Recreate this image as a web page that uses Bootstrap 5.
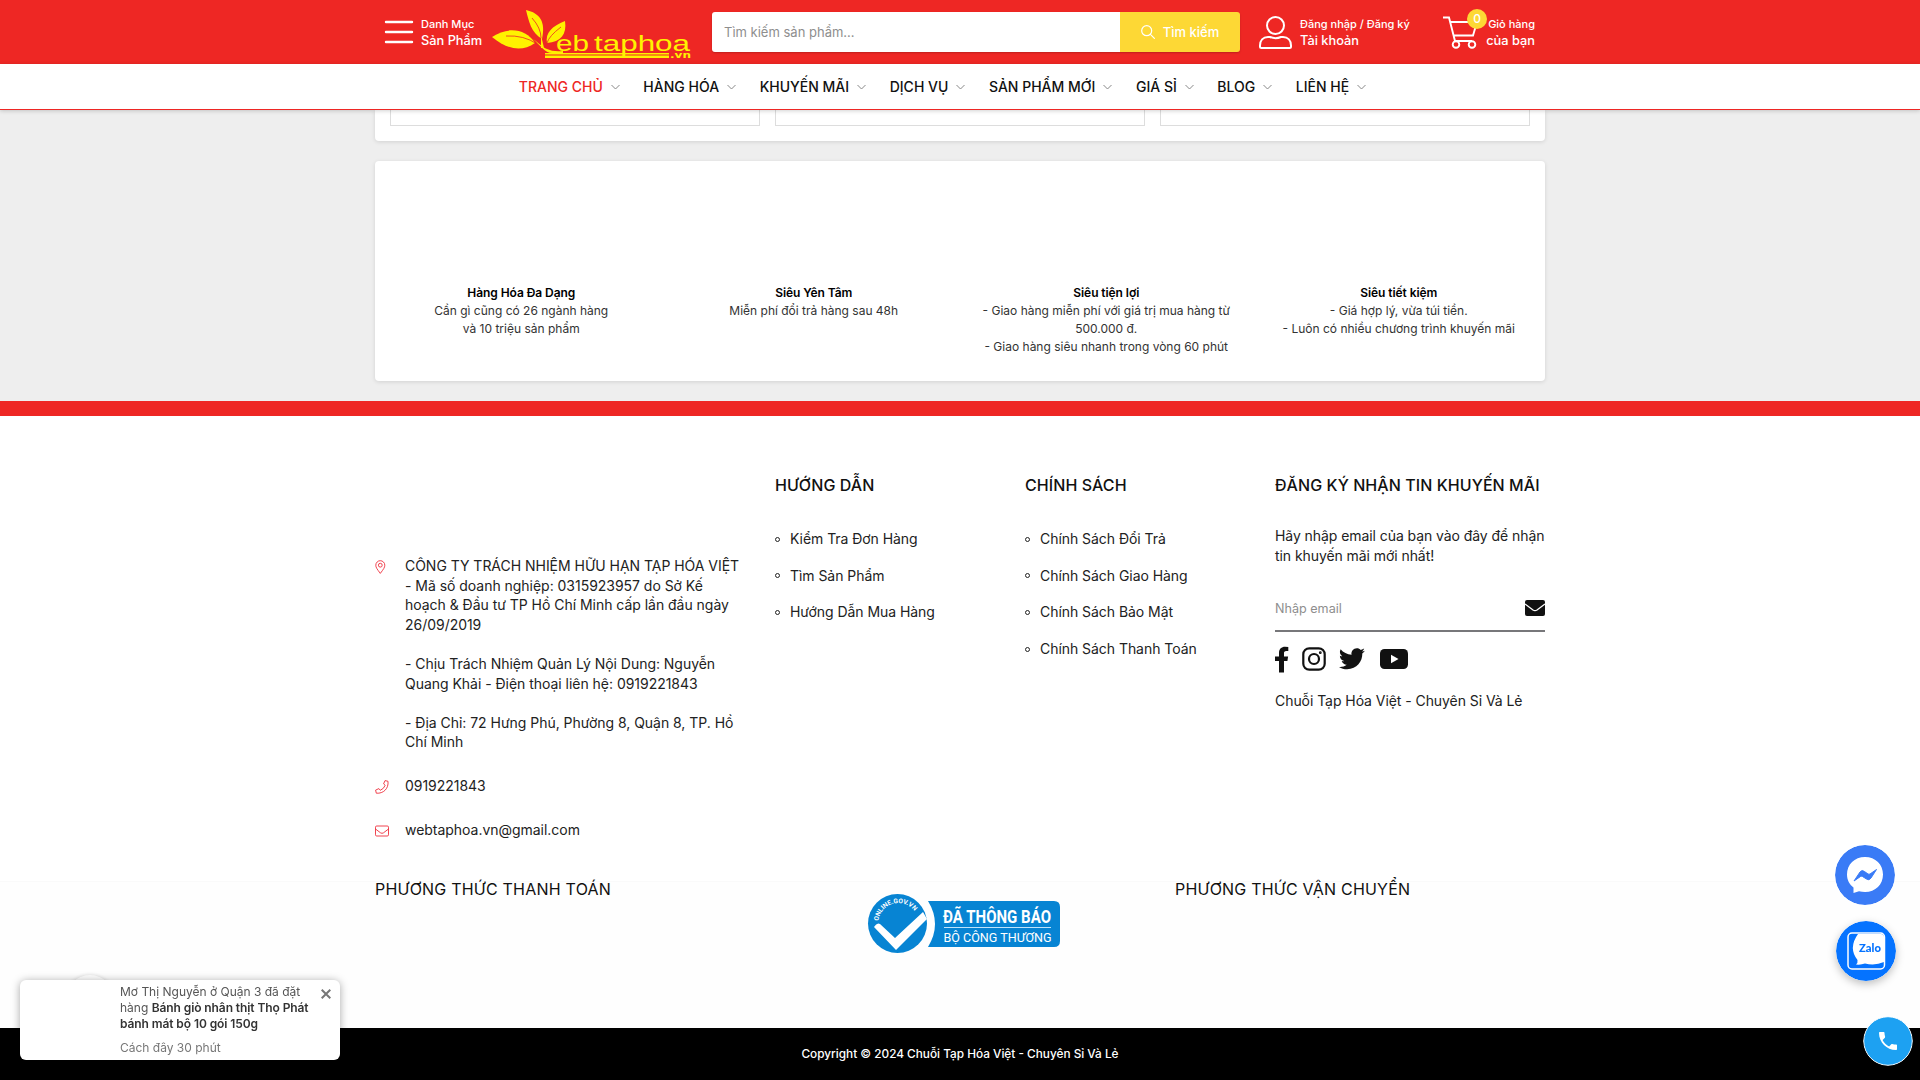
<!DOCTYPE html>
<html lang="vi">
<head>
<meta charset="utf-8">
<meta name="viewport" content="width=device-width, initial-scale=1">
<title>Chuỗi Tạp Hóa Việt - Chuyên Sỉ Và Lẻ</title>
<link href="https://cdn.jsdelivr.net/npm/bootstrap@5.3.0/dist/css/bootstrap.min.css" rel="stylesheet">
<style>
:root{--brand:#ee2724;--sun:#fdd835}
html,body{height:1080px;overflow:hidden}
body{font-family:Inter,"Noto Sans",sans-serif;font-size:14px;line-height:1.4;color:#111;background:#eee}
.wrap{width:1170px;margin:0 auto;flex:none}
.topbar{height:64px;background:var(--brand);color:#fff}
.topbar .wrap{height:64px;font-weight:500}
.two-line{line-height:18px;white-space:nowrap}
.two-line .l1{font-size:11px;height:18px}
.two-line .l2{font-size:12.8px;height:18px;margin-top:-1px}
.menu-btn{width:117px;padding-left:9px;gap:7px}
.brand-logo{width:200px;height:52px;display:block;flex:none;overflow:visible}
.search-box{width:528px;height:40px;margin-left:20px;border-radius:3px;overflow:hidden;box-shadow:0 1px 2px rgba(0,0,0,.2)}
.search-box input{border:0;width:408px;padding:0 12px;font-size:13px;outline:0}
.search-box input::placeholder,.mail-in::placeholder{color:#8e8e8e;opacity:1}
.search-box button{width:120px;border:0;background:var(--sun);color:#fff;font-size:13px;font-weight:500;padding:0}
.account{margin-left:19px;width:184px;gap:8px}
.cart-box{width:92px}
.cart-num{left:24px;top:-6px;width:20px;height:20px;background:var(--sun);border-radius:50%;font-size:12px;line-height:20px}
.mainnav{height:46px;background:#fff;border-bottom:1px solid var(--brand);box-shadow:0 1px 4px rgba(0,0,0,.18);gap:23.6px;position:relative;z-index:2;padding:0 35px 0 0}
.mainnav a{color:#111;font-weight:500;gap:8px;text-decoration:none;white-space:nowrap}
.mainnav a.on{color:var(--brand)}
.panel{background:#fff;border-radius:4px;box-shadow:0 1px 4px rgba(0,0,0,.12)}
.p-top{height:31px;padding:0 15px;border-radius:0 0 4px 4px}
.slot{width:370px;height:16px;border:1px solid #ddd;border-top:0}
.p-serv{height:220px;margin-top:20px;padding-top:123px;font-size:12px;line-height:18px;color:#333}
.p-serv b{font-weight:600;color:#000;letter-spacing:-.07px}
.redline{height:15px;background:var(--brand);margin-top:20px}
.foot{background:#fff;height:465px}
.foot h4{font-size:16px;font-weight:500;line-height:20px;margin:0;white-space:nowrap;color:#111;letter-spacing:.07px}
.foot-col{padding-top:59px}
.info{width:400px;padding-top:140px;letter-spacing:-.03px}
.info .d-flex{gap:16px;margin-bottom:24.2px}
.info svg{width:14px;flex:none;margin-top:4px}
.links{width:250px}
.links ul{list-style:none;padding:0;margin:26px 0 0;letter-spacing:-.05px}
.links li{height:36.6px;line-height:20px;display:flex;align-items:center;gap:10px;white-space:nowrap}
.links li::before{content:"";width:5px;height:5px;border:1px solid #222;border-radius:50%}
.c-light{color:#222}
.news{width:270px}
.news-note{margin-top:31px;letter-spacing:-.07px}
.mail-row{height:46px;border-bottom:2px solid #77777a;margin-top:21px}
.mail-in{border:0;font-size:12.6px;outline:0;padding:2px 0 0;width:220px}
.socials{height:28px;margin-top:13px}
.slogan{margin-top:18px;letter-spacing:-.06px}
.foot2{background:#fefefe;border-top:1px solid #fafafa;height:147px}
.foot2 h4{font-size:16px;font-weight:400;line-height:20px;margin:-3px 0 0;white-space:nowrap;letter-spacing:.22px}
.pay-head{width:490px}
.seal{margin-top:9px}
.copy{height:52px;background:#000;color:#fff;font-size:11.8px;font-weight:500}
.float-c{position:fixed;border-radius:50%}
.toastbox{position:fixed;left:20px;top:980px;width:320px;height:80px;background:#fff;border-radius:6px;box-shadow:0 1px 8px rgba(0,0,0,.35);padding:4px 30px 0 100px;font-size:12px;line-height:16px;color:#555;white-space:nowrap}
.toastbox b{font-weight:600;color:#333;letter-spacing:-.09px}
.ago{margin-top:8px;color:#777}
.ghost{position:fixed;left:65px;top:975px;width:50px;height:50px;border-radius:50%;background:#fff;box-shadow:0 0 4px rgba(0,0,0,.15)}
</style>
<script src="https://cdn.jsdelivr.net/npm/bootstrap@5.3.0/dist/js/bootstrap.bundle.min.js"></script>
</head>
<body class="d-flex flex-column">
<header class="topbar flex-shrink-0">
 <div class="wrap d-flex align-items-center">
  <div class="menu-btn d-flex align-items-center flex-shrink-0">
   <svg width="30" height="24" viewBox="0 0 30 24" stroke="#fff" stroke-width="2.4" stroke-linecap="round"><path d="M2 2h26M2 12h26M2 22h26"/></svg>
   <div class="two-line"><div class="l1">Danh Mục</div><div class="l2">Sản Phẩm</div></div>
  </div>
  <svg class="brand-logo" viewBox="492 6 200 52" fill="#fff200">
   <path d="M526 10C540 13 546 22 542 39C531 32 529 22 526 10Z"/>
   <path d="M492 37C508 26 526 29 535 43C522 52 508 50 492 37Z"/>
   <path d="M565 21C567 34 561 42 547 43C545 33 552 26 565 21Z"/>
   <path d="M533 39C539 43 542 47 547 49Q553 52 563 51L563 53H552C545 53 540 45 533 39ZM541 35L544 48H541Z"/>
   <path d="M532 18Q541 28 541 38M506 36Q524 35 537 44M561 27Q549 36 547 43" fill="none" stroke="#ee2724" stroke-width=".8"/>
   <text x="556" y="51" font-family="Liberation Sans" font-size="22" textLength="33" lengthAdjust="spacingAndGlyphs">eb</text>
   <text x="594" y="51" font-family="Liberation Sans" font-size="22" textLength="96" lengthAdjust="spacingAndGlyphs">taphoa</text>
   <path d="M545 53h124v1.5H545zM545 55.5h124V58H545z"/>
   <text x="670" y="57.500" font-family="DejaVu Sans" font-size="8" font-weight="bold" textLength="21" lengthAdjust="spacingAndGlyphs">.vn</text>
  </svg>
  <form class="search-box d-flex flex-shrink-0">
   <input type="text" placeholder="Tìm kiếm sản phẩm...">
   <button type="button" class="d-flex align-items-center justify-content-center gap-2"><svg width="14" height="14" viewBox="0 0 14 14" fill="none" stroke="#fff" stroke-width="1.2" stroke-linecap="round"><circle cx="5.7" cy="5.7" r="5"/><path d="M9.4 9.4L13.4 13.4"/></svg>Tìm kiếm</button>
  </form>
  <div class="account d-flex align-items-center flex-shrink-0">
   <svg width="33" height="33" viewBox="0 0 33 33" fill="none" stroke="#fff" stroke-width="2"><circle cx="16.5" cy="9.5" r="8.5"/><path d="M11 21H9C4 21 1 24.500 1 29.500V30.500Q1 32 2.500 32H30.500Q32 32 32 30.500V29.500C32 24.500 29 21 24 21H22Q16.500 23.500 11 21Z"/></svg>
   <div class="two-line"><div class="l1">Đăng nhập / Đăng ký</div><div class="l2">Tài khoản</div></div>
  </div>
  <div class="cart-box position-relative d-flex align-items-center justify-content-between flex-shrink-0">
   <svg width="36" height="33" viewBox="0 0 36 33" fill="none" stroke="#fff" stroke-width="1.900"><path d="M0 1.500H6L12 25H29M7.500 6H34L30 19.500H10.500"/><circle cx="13" cy="28.500" r="3.300"/><circle cx="29" cy="28.500" r="3.300"/></svg>
   <span class="cart-num position-absolute text-center">0</span>
   <div class="two-line text-end"><div class="l1">Giỏ hàng</div><div class="l2">của bạn</div></div>
  </div>
 </div>
</header>
<nav class="mainnav d-flex justify-content-center align-items-center flex-shrink-0">
 <a class="on d-flex align-items-center" href="#">TRANG CHỦ<svg width="9" height="6" viewBox="0 0 9 6" fill="none" stroke="#888"><path d="M.5 1L4.500 5L8.500 1"/></svg></a>
 <a class="d-flex align-items-center" href="#">HÀNG HÓA<svg width="9" height="6" viewBox="0 0 9 6" fill="none" stroke="#888"><path d="M.5 1L4.500 5L8.500 1"/></svg></a>
 <a class="d-flex align-items-center" href="#">KHUYẾN MÃI<svg width="9" height="6" viewBox="0 0 9 6" fill="none" stroke="#888"><path d="M.5 1L4.500 5L8.500 1"/></svg></a>
 <a class="d-flex align-items-center" href="#">DỊCH VỤ<svg width="9" height="6" viewBox="0 0 9 6" fill="none" stroke="#888"><path d="M.5 1L4.500 5L8.500 1"/></svg></a>
 <a class="d-flex align-items-center" href="#">SẢN PHẨM MỚI<svg width="9" height="6" viewBox="0 0 9 6" fill="none" stroke="#888"><path d="M.5 1L4.500 5L8.500 1"/></svg></a>
 <a class="d-flex align-items-center" href="#">GIÁ SỈ<svg width="9" height="6" viewBox="0 0 9 6" fill="none" stroke="#888"><path d="M.5 1L4.500 5L8.500 1"/></svg></a>
 <a class="d-flex align-items-center" href="#">BLOG<svg width="9" height="6" viewBox="0 0 9 6" fill="none" stroke="#888"><path d="M.5 1L4.500 5L8.500 1"/></svg></a>
 <a class="d-flex align-items-center" href="#">LIÊN HỆ<svg width="9" height="6" viewBox="0 0 9 6" fill="none" stroke="#888"><path d="M.5 1L4.500 5L8.500 1"/></svg></a>
</nav>
<section class="wrap panel p-top d-flex justify-content-between"><div class="slot"></div><div class="slot"></div><div class="slot"></div></section>
<section class="wrap panel p-serv">
 <div class="row g-0 text-center">
  <div class="col-3"><b>Hàng Hóa Đa Dạng</b><br>Cần gì cũng có 26 ngành hàng<br>và 10 triệu sản phẩm</div>
  <div class="col-3"><b>Siêu Yên Tâm</b><br>Miễn phí đổi trả hàng sau 48h</div>
  <div class="col-3"><b>Siêu tiện lợi</b><br>- Giao hàng miễn phí với giá trị mua hàng từ<br>500.000 đ.<br>- Giao hàng siêu nhanh trong vòng 60 phút</div>
  <div class="col-3"><b>Siêu tiết kiệm</b><br>- Giá hợp lý, vừa túi tiền.<br>- Luôn có nhiều chương trình khuyến mãi</div>
 </div>
</section>
<div class="redline flex-shrink-0"></div>
<footer class="flex-shrink-0">
 <div class="foot"><div class="wrap d-flex c-light">
  <div class="info">
   <div class="d-flex"><svg height="14" viewBox="0 0 14 14" fill="none" stroke="#ee2f3c" stroke-width=".9"><path d="M5.300 13.400C2 9 .8 7.500 .8 5.200A4.500 4.500 0 0 1 9.800 5.200C9.800 7.500 8.600 9 5.300 13.400Z"/><circle cx="5.300" cy="5.200" r="1.900"/></svg>
    <div class="text-nowrap">CÔNG TY TRÁCH NHIỆM HỮU HẠN TẠP HÓA VIỆT<br>- Mã số doanh nghiệp: 0315923957 do Sở Kế<br>hoạch &amp; Đầu tư TP Hồ Chí Minh cấp lần đầu ngày<br>26/09/2019<br><br>- Chịu Trách Nhiệm Quản Lý Nội Dung: Nguyễn<br>Quang Khải - Điện thoại liên hệ: 0919221843<br><br>- Địa Chỉ: 72 Hưng Phú, Phường 8, Quận 8, TP. Hồ<br>Chí Minh</div></div>
   <div class="d-flex"><svg height="14" viewBox="0 0 14 14" fill="none" stroke="#ee2f3c" stroke-width=".9" stroke-linejoin="round"><path d="M10 .6L13 1.300C13.800 8.500 8.500 13.800 1.300 13.200L.6 10.100L3.900 8.600L5.300 10.300Q8.800 8.800 10.200 5.300L8.600 3.900Z"/></svg><div>0919221843</div></div>
   <div class="d-flex"><svg height="14" viewBox="0 0 14 14" fill="none" stroke="#ee2f3c" stroke-width=".9"><rect x=".5" y="2" width="13" height="10" rx="1.200"/><path d="M.5 5L5.500 8.800Q7 9.900 8.500 8.800L13.500 5"/></svg><div>webtaphoa.vn@gmail.com</div></div>
  </div>
  <div class="links foot-col"><h4>HƯỚNG DẪN</h4><ul><li>Kiểm Tra Đơn Hàng</li><li>Tìm Sản Phẩm</li><li>Hướng Dẫn Mua Hàng</li></ul></div>
  <div class="links foot-col"><h4>CHÍNH SÁCH</h4><ul><li>Chính Sách Đổi Trả</li><li>Chính Sách Giao Hàng</li><li>Chính Sách Bảo Mật</li><li>Chính Sách Thanh Toán</li></ul></div>
  <div class="news foot-col"><h4>ĐĂNG KÝ NHẬN TIN KHUYẾN MÃI</h4>
   <div class="news-note text-nowrap">Hãy nhập email của bạn vào đây để nhận<br>tin khuyến mãi mới nhất!</div>
   <div class="mail-row d-flex align-items-center justify-content-between"><input class="mail-in" placeholder="Nhập email"><svg width="20" height="16" viewBox="0 0 20 16"><rect width="20" height="16" rx="2" fill="#111"/><path d="M0 4L8 10Q10 11.300 12 10L20 4" fill="none" stroke="#fff" stroke-width="1.300"/></svg></div>
   <div class="d-flex align-items-center socials">
    <svg width="14" height="27" viewBox="0 0 14 27" fill="#111"><path d="M4 26.500V15H0V10.500H4V7C4 2.900 6.500 .7 10 .7L13.300 1V5H11.300C9.400 5 9 6 9 7.200V10.500H13.100L12.400 15H9V26.500Z"/></svg>
    <svg style="margin-left:13px" width="24" height="24" viewBox="0 0 24 24" fill="none" stroke="#111" stroke-width="2.200"><rect x="1.300" y="1.300" width="21.400" height="21.400" rx="6"/><circle cx="12" cy="12" r="5"/><circle cx="18.300" cy="5.700" r=".6" stroke-width="1.600"/></svg>
    <svg style="margin-left:13px" width="26" height="22" viewBox="0 0 24 20" fill="#111"><path d="M21.500 5c.3 7-5 14.500-14 14.500-2.800 0-5.300-.8-7.500-2.200 2.500.3 5-.4 7.100-2-2.200 0-4-1.500-4.600-3.400.8.100 1.500.1 2.200-.1C2.400 11.300.8 9.300.8 6.900c.7.400 1.400.6 2.200.6C.8 6 .2 3.200 1.500 1 3.900 3.900 7.500 5.900 11.600 6.100 10.900 3 13.300 0 16.500 0c1.400 0 2.700.6 3.600 1.600 1.100-.2 2.200-.6 3.100-1.200-.4 1.200-1.100 2.100-2.200 2.700 1-.1 2-.4 2.900-.8-.7 1-1.500 1.900-2.400 2.700Z"/></svg>
    <svg style="margin-left:15px" width="28" height="20" viewBox="0 0 28 20"><rect width="28" height="20" rx="4.500" fill="#111"/><path d="M11 5.700V14.300L18.500 10Z" fill="#fff"/></svg>
   </div>
   <div class="slogan">Chuỗi Tạp Hóa Việt - Chuyên Sỉ Và Lẻ</div>
  </div>
 </div></div>
 <div class="foot2"><div class="wrap d-flex">
  <h4 class="pay-head">PHƯƠNG THỨC THANH TOÁN</h4>
  <svg class="seal" width="310" height="64" viewBox="865 891 310 64" font-family="Roboto">
   <path d="M928 901H1054Q1060 901 1060 907V941Q1060 947 1054 947H928Q942 924 928 901Z" fill="#0784d3"/>
   <circle cx="897.500" cy="923.500" r="29.500" fill="#0784d3"/>
   <path d="M874 927Q877 922 880 924L895 938L923 912L927 919L896 950Z" fill="#fff"/>
   <path id="arc" d="M878.500 921A20 20 0 0 1 914 910.500" fill="none"/>
   <text font-size="6.500" font-weight="700" fill="#fff"><textPath href="#arc">ONLINE.GOV.VN</textPath></text>
   <text x="943" y="923" font-size="19" font-weight="700" fill="#fff" textLength="108" lengthAdjust="spacingAndGlyphs">ĐÃ THÔNG BÁO</text>
   <path d="M944 927.500H1051" stroke="#bfe3fa"/>
   <text x="943.500" y="942" font-size="13.500" fill="#fff" textLength="108" lengthAdjust="spacingAndGlyphs">BỘ CÔNG THƯƠNG</text>
  </svg>
  <h4>PHƯƠNG THỨC VẬN CHUYỂN</h4>
 </div></div>
 <div class="copy d-flex align-items-center justify-content-center">Copyright © 2024 Chuỗi Tạp Hóa Việt - Chuyên Sỉ Và Lẻ</div>
</footer>
<div class="ghost"></div>
<div class="toastbox">Mơ Thị Nguyễn ở Quận 3 đã đặt<br>hàng <b>Bánh giò nhân thịt Thọ Phát<br>bánh mát bộ 10 gói 150g</b><div class="ago">Cách đây 30 phút</div>
 <svg class="position-absolute" style="left:301px;top:9px" width="10" height="10" viewBox="0 0 10 10" stroke="#777" stroke-width="2"><path d="M.7.7L9.300 9.300M9.300.7L.7 9.300"/></svg></div>
<svg class="float-c" style="left:1835px;top:845px" width="60" height="60" viewBox="0 0 60 60"><circle cx="30" cy="30" r="30" fill="#3a7bf6"/><path d="M30 12C19.500 12 12 19.600 12 29.500C12 35 14.500 39.500 18.500 42.500V48L24 46.200Q27 47 30 47C40.500 47 48 39.400 48 29.500S40.500 12 30 12Z" fill="#fff"/><path d="M19 36L25 27Q27 24.500 29.500 26.500L33 29Q34 29.500 35 29L41.500 24.500L36 33Q34 36 31.500 34L27.500 31.500Q26.500 31 25.500 31.500Z" fill="#3a7bf6" stroke="#3a7bf6" stroke-linejoin="round"/></svg>
<svg class="float-c" style="left:1836px;top:921px;box-shadow:0 3px 8px rgba(0,0,0,.25)" width="60" height="60" viewBox="0 0 60 60"><circle cx="30" cy="30" r="30" fill="#0573ff"/><rect x="12" y="12" width="36.500" height="36" rx="4" fill="none" stroke="#fff" stroke-width="1.500"/><path d="M22 13H45Q48 13 48 16V41Q39 45 29 42.500Q25 44 20 43.500Q22 42 21.500 39Q12 27 22 13Z" fill="#fff"/><text x="23" y="31" font-family="Lato" font-weight="900" font-size="12" fill="#0573ff" textLength="22" lengthAdjust="spacingAndGlyphs">Zalo</text></svg>
<svg class="float-c" style="left:1863px;top:1016px" width="50" height="50" viewBox="0 0 50 50"><circle cx="25" cy="25" r="24.300" fill="#1da1f2" stroke="#fff"/><path d="M19.600 23.900C21 26.700 23.300 29 26.100 30.400L28.300 28.200C28.600 27.900 29 27.800 29.300 28C30.500 28.400 31.700 28.600 33 28.600C33.600 28.600 34 29 34 29.600V33C34 33.600 33.600 34 33 34C23.600 34 16 26.400 16 17C16 16.400 16.400 16 17 16H20.500C21.100 16 21.500 16.400 21.500 17C21.500 18.300 21.700 19.500 22.100 20.600C22.200 21 22.100 21.400 21.900 21.700Z" fill="#fff"/></svg>
</body>
</html>
